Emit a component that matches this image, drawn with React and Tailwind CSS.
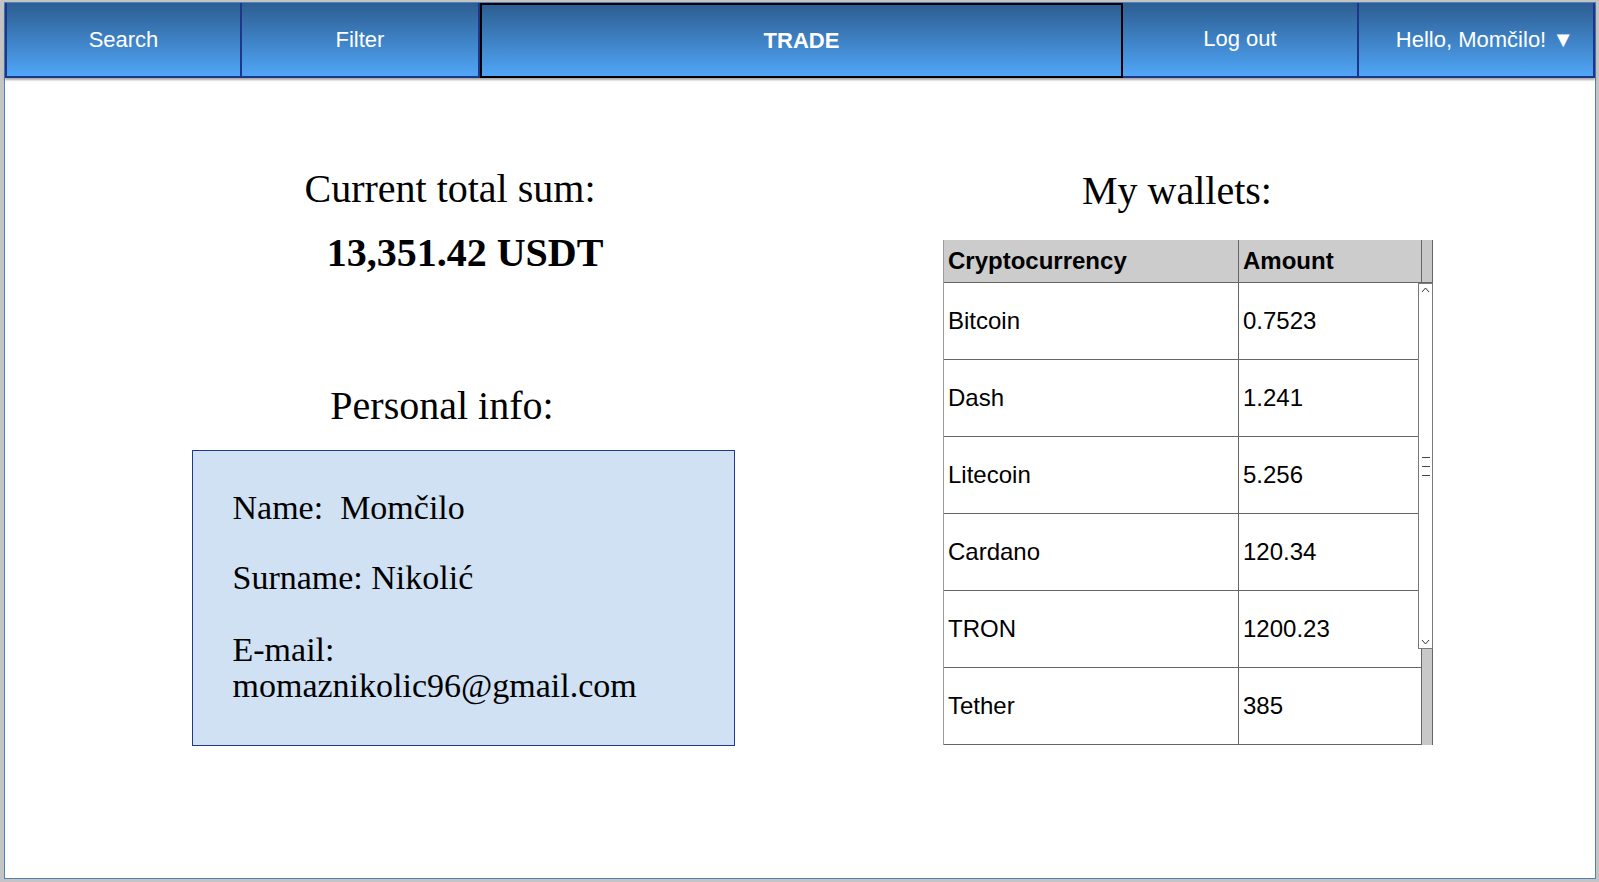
import React from "react";

const wallets = [
  ["Bitcoin", "0.7523"],
  ["Dash", "1.241"],
  ["Litecoin", "5.256"],
  ["Cardano", "120.34"],
  ["TRON", "1200.23"],
  ["Tether", "385"],
];

const navBtn =
  "flex items-center justify-center text-white text-[22px] bg-linear-to-b from-[#2d5e92] to-[#50a6f8] border-b-2 border-r-2 border-[#1d3687]";

function Navbar() {
  return (
    <div className="flex h-[75px] shrink-0 shadow-[0_2px_2px_rgba(0,0,0,0.35)] font-['Liberation_Sans',Arial,sans-serif]">
      <button className={`${navBtn} w-[237px] border-l-2`}>Search</button>
      <button className={`${navBtn} w-[238px]`}>Filter</button>
      <button className="flex w-[643px] items-center justify-center border-2 border-black bg-linear-to-b from-[#2d5e92] to-[#50a6f8] text-[22px] font-bold text-white">
        TRADE
      </button>
      <button className={`${navBtn} w-[236px] pb-[3px]`}>Log out</button>
      <button className={`${navBtn} w-[236px] pl-[18px]`}>Hello, Momčilo! ▼</button>
    </div>
  );
}

function Scrollbar() {
  return (
    <div className="flex w-[12px] flex-col border-x border-[#666] bg-[#c8c8c8]">
      <div className="h-[43px] shrink-0 border-b border-[#666]" />
      <div className="-ml-[4px] flex h-[366px] w-[15px] flex-col items-center justify-between border border-[#7a7a7a] bg-white py-[3px]">
        <svg width="9" height="6" viewBox="0 0 9 6">
          <polyline points="1,5 4.5,1 8,5" fill="none" stroke="#333" strokeWidth="1" />
        </svg>
        <div className="flex flex-col gap-[8px]">
          <div className="h-px w-[8px] bg-[#444]" />
          <div className="h-px w-[8px] bg-[#444]" />
          <div className="h-px w-[8px] bg-[#444]" />
        </div>
        <svg width="9" height="6" viewBox="0 0 9 6">
          <polyline points="1,1 4.5,5 8,1" fill="none" stroke="#333" strokeWidth="1" />
        </svg>
      </div>
    </div>
  );
}

function WalletTable() {
  return (
    <div className="flex w-[490px] font-['Liberation_Sans',Arial,sans-serif] text-[24px] text-black">
      <div className="w-[478px] border-l border-[#9a9a9a]">
        <div className="flex h-[43px] border-b border-[#666] bg-[#cccccc] font-bold">
          <div className="flex w-[295px] items-center border-r border-[#666] pl-[4px]">Cryptocurrency</div>
          <div className="flex flex-1 items-center pl-[4px]">Amount</div>
        </div>
        {wallets.map(([name, amount]) => (
          <div key={name} className="flex h-[77px] border-b border-[#666]">
            <div className="flex w-[295px] items-center border-r border-[#666] pl-[4px]">{name}</div>
            <div className="flex flex-1 items-center pl-[4px]">{amount}</div>
          </div>
        ))}
      </div>
      <Scrollbar />
    </div>
  );
}

export default function App() {
  return (
    <div className="h-[882px] w-[1599px] bg-[#c4c4c4] pl-[4px] pt-[2px]">
      <div className="flex h-[877px] w-[1592px] flex-col border border-[#4f81bd] bg-white">
        <Navbar />
        <div className="flex font-['Liberation_Serif','Times_New_Roman',serif] text-black">
          <div className="flex w-[920px] flex-col items-center pt-[88px]">
            <h1 className="pr-[30px] text-[40px] leading-[46px]">Current total sum:</h1>
            <p className="mt-[18px] text-[40px] font-bold leading-[46px]">13,351.42 USDT</p>
            <h2 className="mt-[107px] pr-[46px] text-[40px] leading-[46px]">Personal info:</h2>
            <div className="mr-[4px] mt-[21px] h-[296px] w-[543px] border border-[#1f3a8c] bg-[#d0e1f3] pl-[40px] pr-[40px] pt-[39px] text-[34px] leading-[36px]">
              <p>Name:&nbsp; Momčilo</p>
              <p className="mt-[34px]">Surname: Nikolić</p>
              <p className="mt-[36px]">E-mail: momaznikolic96@gmail.com</p>
            </div>
          </div>
          <div className="flex flex-col pl-[18px] pt-[90px]">
            <h2 className="w-[490px] pr-[22px] text-center text-[40px] leading-[46px]">My wallets:</h2>
            <div className="mt-[26px]">
              <WalletTable />
            </div>
          </div>
        </div>
      </div>
    </div>
  );
}
